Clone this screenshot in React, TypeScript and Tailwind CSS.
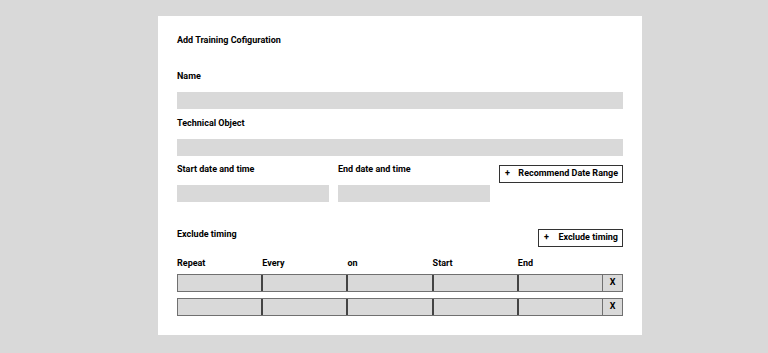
import React from "react";

const label = "text-[9px] leading-[12px] font-bold text-black";

function Cell({ last }: { last?: boolean }) {
  return <div className={`flex-1 h-full bg-[#d9d9d9] ${last ? "" : "border-r-2 border-r-[#444]"}`} />;
}

function Row() {
  return (
    <div className="flex h-[18px] w-full">
      <div className="flex flex-1 h-full border border-[#707070]">
        <Cell />
        <Cell />
        <Cell />
        <Cell />
        <Cell last />
      </div>
      <div className="w-[20px] h-full border border-[#707070] border-l-0 bg-[#d9d9d9] flex items-center justify-center text-[9px] font-bold">
        X
      </div>
    </div>
  );
}

export default function App() {
  return (
    <div
      className="w-[768px] h-[353px] bg-[#d9d9d9] pt-[16px]"
      style={{ fontFamily: 'Roboto, "Liberation Sans", sans-serif' }}
    >
      <div className="ml-[158px] w-[484px] h-[319px] bg-white px-[19px] pt-[18px] flex flex-col">
        <div className={label}>Add Training Cofiguration</div>
        <div className={`${label} mt-[24px]`}>Name</div>
        <div className="mt-[10px] h-[17px] bg-[#d9d9d9]" />
        <div className={`${label} mt-[8px]`}>Technical Object</div>
        <div className="mt-[10px] h-[17px] bg-[#d9d9d9]" />
        <div className="mt-[7px] flex">
          <div className="w-[152px] flex flex-col">
            <div className={`${label} mt-[0px]`}>Start date and time</div>
            <div className="mt-[10px] h-[17px] bg-[#d9d9d9]" />
          </div>
          <div className="ml-[9px] w-[152px] flex flex-col">
            <div className={label}>End date and time</div>
            <div className="mt-[10px] h-[17px] bg-[#d9d9d9]" />
          </div>
          <div className="ml-auto mt-[2px]">
            <div className="h-[18px] w-[124px] border border-[#333] flex items-center pl-[5px] pr-[4px] text-[9px] font-bold">
              <span>+</span>
              <span className="ml-auto">Recommend Date Range</span>
            </div>
          </div>
        </div>
        <div className="mt-[26px] flex items-start">
          <div className={label}>Exclude timing</div>
          <div className="ml-auto mt-[1px] h-[18px] w-[85px] border border-[#333] flex items-center pl-[5px] pr-[4px] text-[9px] font-bold">
            <span>+</span>
            <span className="ml-auto">Exclude timing</span>
          </div>
        </div>
        <div className="mt-[10px] flex w-[426px]">
          {["Repeat", "Every", "on", "Start", "End"].map((h) => (
            <div key={h} className={`${label} flex-1`}>{h}</div>
          ))}
        </div>
        <div className="mt-[5px]">
          <Row />
        </div>
        <div className="mt-[6px]">
          <Row />
        </div>
      </div>
    </div>
  );
}
